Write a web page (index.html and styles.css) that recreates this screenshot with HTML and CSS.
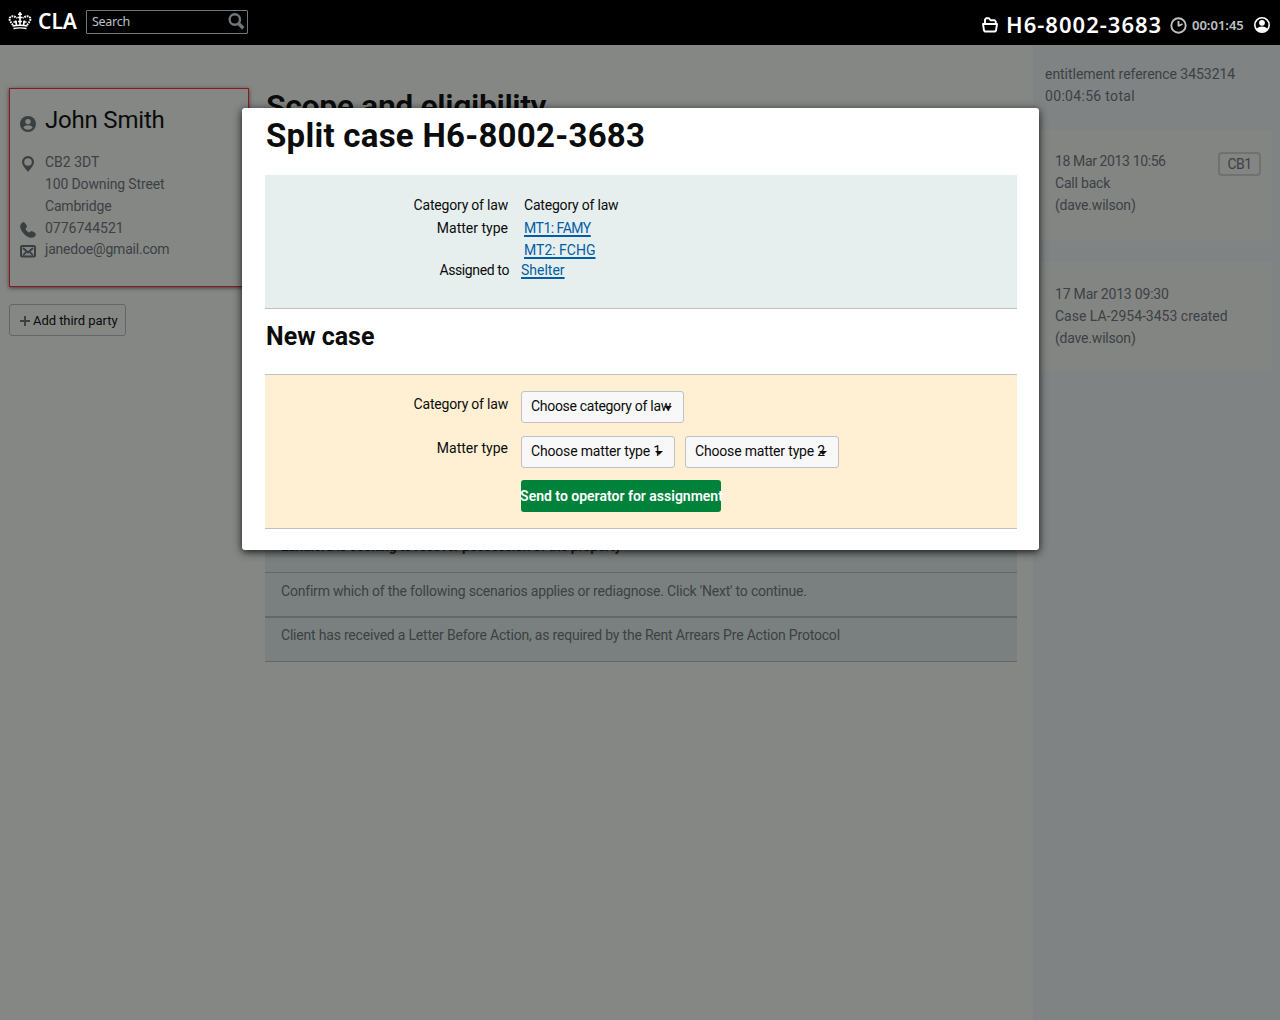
FILE: index.html
```html
<!DOCTYPE html>
<html lang="en">
<head>
<meta charset="utf-8">
<title>Split case H6-8002-3683</title>
<link rel="stylesheet" href="styles.css">
</head>
<body>
<header class="topbar">
  <svg class="crown" width="24" height="18" viewBox="0 0 24 18" fill="none" stroke="#fff"><path d="M4.500 14Q12 12.500 19.500 14M5.500 16.500Q12 15.200 18.500 16.500" stroke-width="1.400"/><path d="M5 13L2 9Q.8 5.500 3.200 4.500Q6 3.600 9 6M19 13L22 9Q23.200 5.500 20.800 4.500Q18 3.600 15 6" stroke-width="2" stroke-dasharray="1.800 .8"/><path d="M12 0v6M10 2.200h4M9.500 5.500h5M12 5v8M7.500 8.500l1 4.500M16.500 8.500l-1 4.500M5.500 10h3.500M15 10h3.500M10 9.500h4" stroke-width="1.600"/></svg>
  <span class="brand">CLA</span>
  <div class="search"><span>Search</span>
    <svg width="17" height="17" viewBox="0 0 17 17" fill="none" stroke="#6f777b"><circle cx="6.800" cy="6.500" r="5.200" stroke-width="2.400"/><path d="M10.500 10.500l4.800 4.800" stroke-width="3.400"/></svg>
  </div>
  <div class="session">
    <svg class="folder" width="16" height="16" viewBox="0 0 16 16" fill="none" stroke="#fff" stroke-width="1.900" stroke-linejoin="round"><path d="M3 6V2.500L4 1.300h3l1.500 2h4.200l1 1V6M1 7h14l-1 6.500-1 1H3l-1-1z"/></svg>
    <span class="ref">H6-8002-3683</span>
    <svg class="clock" width="17" height="17" viewBox="0 0 17 17" fill="none" stroke="#bfc1c3"><circle cx="8.500" cy="8.500" r="7.200" stroke-width="1.900"/><path d="M8.500 4v5.500M8.500 9l4-2" stroke-width="1.900"/></svg>
    <span class="timer">00:01:45</span>
    <svg class="user" width="16" height="16" viewBox="0 0 16 16"><circle cx="8" cy="8" r="7.200" fill="none" stroke="#fff" stroke-width="1.600"/><circle cx="8" cy="5.800" r="2.900" fill="#fff"/><path d="M2.500 12Q4 9.500 8 9.500T13.500 12Q11.500 15 8 15T2.500 12z" fill="#fff"/></svg>
  </div>
</header>
<div class="page">
  <aside class="client">
    <section class="client-card">
      <div class="client-name"><svg width="16" height="16" viewBox="0 0 16 16"><circle cx="8" cy="8" r="8" fill="#3a3f41"/><circle cx="8" cy="5.600" r="2.700" fill="#858785"/><path d="M3.300 11.500Q4.500 9.200 8 9.200T12.700 11.500Q11 13.700 8 13.700T3.300 11.500z" fill="#858785"/></svg><h2>John Smith</h2></div>
      <div class="detail"><svg width="16" height="16" viewBox="0 0 16 16"><path d="M8 0a6 6 0 0 0-6 6C2 9.500 6 13 8 16c2-3 6-6.500 6-10a6 6 0 0 0-6-6zm0 2.200a3.800 3.800 0 1 1 0 7.600 3.800 3.800 0 0 1 0-7.600z" fill="#3a3f41" fill-rule="evenodd"/></svg><p><span class="normal">CB2 3DT</span><br><span class="address">100 Downing Street</span><br>Cambridge</p></div>
      <div class="detail"><svg width="16" height="16" viewBox="0 0 16 16"><path d="M1 1.800L3.300 0Q5 0 7 4.500L5.500 7c.6 1.300 2 2.800 3.500 3.500l2.500-1.500q4.500 1.500 4.500 4l-1.800 2c-3.500 2-8-.6-10.600-3.600S-1 5 1 1.800z" fill="#3a3f41"/></svg><p class="phone">0776744521</p></div>
      <div class="detail mail"><svg width="16" height="13" viewBox="0 0 16 13" fill="none" stroke="#3a3f41"><rect x="1" y="1" width="14" height="10.500" rx="1" stroke-width="2"/><path d="M3 3l5 4.500L13 3M3 10.500l3.500-4M13 10.500l-3.500-4" stroke-width="1.800"/></svg><p>janedoe@gmail.com</p></div>
    </section>
    <button class="add"><svg width="10" height="10" viewBox="0 0 10 10"><path d="M5 0v10M0 5h10" stroke="#3a3f41" stroke-width="1.900"/></svg>Add third party</button>
  </aside>
  <main>
    <h1>Scope and eligibility</h1>
    <ul class="scenarios">
      <li class="outcome">Landlord is seeking to recover possession of the property</li>
      <li>Confirm which of the following scenarios applies or rediagnose. Click 'Next' to continue.</li>
      <li class="last">Client has received a Letter Before Action, as required by the Rent Arrears Pre Action Protocol</li>
    </ul>
  </main>
  <aside class="log">
    <p class="summary">entitlement reference 3453214<br><span class="loose">00:04:56 total</span></p>
    <article><p><span class="tight">18 Mar 2013 10:56</span><br>Call back<br>(dave.wilson)</p><span class="tag">CB1</span></article>
    <article class="second"><p>17 Mar 2013 09:30<br><span class="normal">Case LA-2954-3453 created</span><br>(dave.wilson)</p></article>
  </aside>
</div>
<section class="modal" role="dialog">
  <h1>Split case H6-8002-3683</h1>
  <div class="panel current">
    <div class="row"><span class="label">Category of law</span><span>Category of law</span></div>
    <div class="row matter"><span class="label normal">Matter type</span><span><a class="tighter" href="#">MT1: FAMY</a><br><a class="normal" href="#">MT2: FCHG</a></span></div>
    <div class="row assigned"><span class="label tight">Assigned to</span><a class="normal" href="#">Shelter</a></div>
  </div>
  <h2>New case</h2>
  <div class="panel new">
    <div class="field"><span class="label">Category of law</span><div class="select wide">Choose category of law<i></i></div></div>
    <div class="field types"><span class="label normal">Matter type</span><div class="select">Choose matter type 1<i></i></div><div class="select">Choose matter type 2<i></i></div></div>
    <button class="send"><span>Send to operator for assignment</span></button>
  </div>
</section>
</body>
</html>
```
FILE: styles.css
```css
* { box-sizing: border-box; }
body {
  margin: 0; height: 1020px; overflow: hidden; position: relative;
  background: #858785; color: #3c4143;
  font: 14px/22px Roboto, sans-serif; letter-spacing: -.2px; white-space: nowrap;
}
h1, h2, p, ul { margin: 0; padding: 0; }
svg { display: block; flex: none; }
button { font: inherit; letter-spacing: 0; padding: 0; white-space: nowrap; }
.normal { letter-spacing: 0; }
.tight { letter-spacing: -.38px; }
.tighter { letter-spacing: -.5px; }
.loose { letter-spacing: .32px; }

/* Top bar */
.topbar { height: 45px; background: #000; color: #fff; display: flex; align-items: flex-start; padding-left: 8px; font-family: "Noto Sans", sans-serif; letter-spacing: 0; }
.crown { margin-top: 12px; }
.brand { font-size: 21px; font-weight: 600; line-height: 28px; margin: 7px 0 0 6px; width: 39px; }
.search { width: 162px; height: 24px; margin: 10px 0 0 9px; border: 1px solid #6f777b; border-radius: 1px; padding: 0 2px 0 5px; display: flex; align-items: center; justify-content: space-between; font-size: 12.5px; letter-spacing: -.27px; color: #bfc1c3; }
.search svg { margin-bottom: 2px; }
.session { margin-left: auto; padding: 9px 10px 0 0; display: flex; align-items: flex-start; }
.folder { margin: 8px 8px 0 0; }
.ref { font-size: 22px; font-weight: 600; line-height: 30px; width: 156px; letter-spacing: 1.02px; }
.clock { margin: 8px 5px 0 8px; }
.timer { font-size: 13px; font-weight: 600; line-height: 32px; color: #bfc1c3; width: 52px; margin-right: 10px; }
.user { margin-top: 8px; }

/* Case page */
.page { display: grid; grid-template-columns: 265px 752px 1fr; height: 975px; }
.client { padding: 43px 16px 0 9px; }
.client-card { height: 199px; border: 1px solid #8a1a20; box-shadow: 0 1px 4px rgba(0,0,0,.55); padding: 15px 10px 0; }
.client-name { display: flex; gap: 9px; height: 47px; }
.client-name svg { margin-top: 12px; }
.client-name h2 { font-size: 24px; font-weight: 400; line-height: 32px; letter-spacing: -.2px; color: #0a0b0b; }
.detail { display: flex; gap: 9px; }
.detail svg { margin-top: 5px; }
.address { letter-spacing: -.14px; }
.phone { letter-spacing: 0; }
.mail { margin-top: -1px; }
.mail svg { margin-top: 7px; }
.add { margin-top: 17px; width: 117px; height: 32px; border: 1px solid #636668; border-radius: 3px; background: none; display: flex; align-items: center; gap: 3px; padding: 1px 0 0 10px; color: #0a0b0b; font-size: 13px; letter-spacing: -.05px; }

main > h1 { font-size: 32px; line-height: 44px; padding: 39px 0 0 1px; height: 450px; color: #0a0b0b; font-weight: 600; letter-spacing: -.4px; }
.scenarios { list-style: none; background: #7a807f; }
.scenarios li { height: 44px; padding: 7px 16px; border-bottom: 1px solid #636769; }
.scenarios .outcome { height: 78px; padding-top: 40px; font-weight: 600; letter-spacing: -.35px; color: #1d2021; }
.scenarios li:nth-child(2) { height: 45px; border-bottom-width: 2px; }
.scenarios .last { padding-top: 6px; }

.log { background: #7f8384; margin-left: 16px; padding: 18px 8px 0 8px; }
.summary { padding-left: 4px; height: 67px; letter-spacing: -.04px; }
.log article { background: #838583; height: 111px; padding: 20px 11px 0 14px; display: flex; justify-content: space-between; align-items: flex-start; }
.log article.second { margin-top: 21px; height: 110px; padding-top: 21px; }
.tag { border: 2px solid #6f7273; border-radius: 4px; width: 43px; height: 24px; margin-top: 2px; line-height: 20px; text-align: center; letter-spacing: -.5px; }

/* Split case dialog */
.modal { position: absolute; left: 242px; top: 108px; width: 797px; height: 442px; background: #fff; border-radius: 3px; box-shadow: 0 2px 9px rgba(0,0,0,.85); padding: 0 22px 0 23px; color: #0b0c0c; }
.modal h1 { font-size: 33px; line-height: 44px; height: 67px; padding: 6px 0 0 1px; font-weight: 700; letter-spacing: .26px; }
.modal h2 { font-size: 25px; line-height: 34px; height: 65px; padding: 11px 0 0 1px; font-weight: 700; letter-spacing: 0; }
.panel { width: 752px; }
.current { height: 134px; background: #e7efee; border-bottom: 1px solid #bfc1c3; padding-top: 19px; }
.row { display: flex; gap: 16px; }
.label { width: 243px; text-align: right; flex: none; }
.matter { margin-top: 1px; }
.assigned { margin-top: -2px; gap: 12px; }
.assigned .label { width: 244px; }
.row a { color: #005ea5; text-decoration: underline; text-decoration-thickness: 2px; text-underline-offset: 2px; }
.new { height: 155px; background: #fff0d3; border: solid #bfc1c3; border-width: 1px 0; padding-top: 16px; }
.field { display: flex; height: 45px; }
.field .label { margin-right: 13px; padding-top: 2px; }
.types .label { padding-top: 1px; }
.select { width: 154px; height: 32px; border: 1px solid #bfc1c3; border-radius: 3px; background: #f8f8f8; padding: 3px 0 0 9px; margin-right: 10px; position: relative; letter-spacing: -.17px; }
.select.wide { width: 163px; letter-spacing: -.3px; }
.select i { position: absolute; right: 11px; top: 14px; border: 4px solid transparent; border-top-color: #0b0c0c; border-bottom: 0; }
.send { display: block; width: 200px; height: 32px; margin: -1px 0 0 256px; border: 0; border-radius: 3px; background: #00823b; color: #fff; font-weight: 600; }
.send span { display: block; margin: 0 -2px 0 -1px; }
```
